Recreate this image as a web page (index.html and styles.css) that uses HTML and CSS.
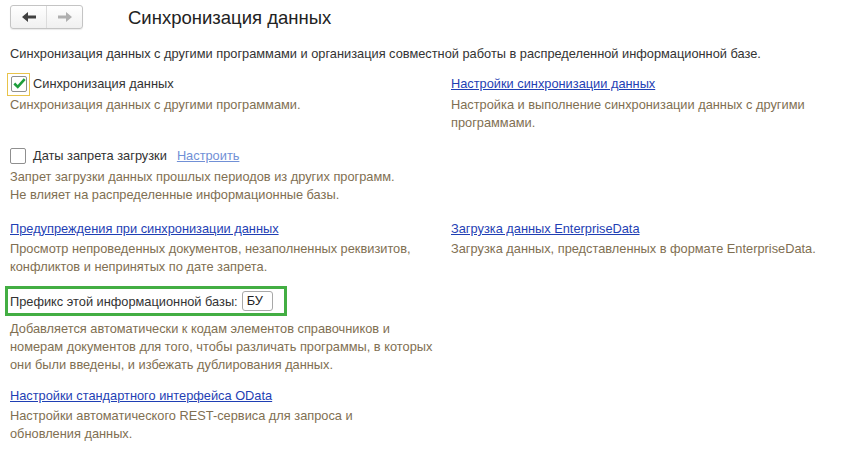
FILE: index.html
```html
<!DOCTYPE html>
<html lang="ru">
<head>
<meta charset="utf-8">
<title>Синхронизация данных</title>
<link rel="stylesheet" href="styles.css">
</head>
<body>
<div class="page">
  <header class="header">
    <div class="nav">
      <button class="nav-btn back" type="button" aria-label="Назад">
        <svg width="14" height="10" viewBox="0 0 14 10"><path d="M0 5 L6 0 L6 3.5 L14 3.5 L14 6.5 L6 6.5 L6 10 Z" fill="#404040"/></svg>
      </button>
      <button class="nav-btn fwd" type="button" aria-label="Вперед">
        <svg width="14" height="10" viewBox="0 0 14 10"><path d="M14 5 L8 0 L8 3.5 L0 3.5 L0 6.5 L8 6.5 L8 10 Z" fill="#b0b0b0"/></svg>
      </button>
    </div>
    <h1 class="title">Синхронизация данных</h1>
  </header>
  <p class="intro">Синхронизация данных с другими программами и организация совместной работы в распределенной информационной базе.</p>

  <div class="grid">
    <div class="cell row1">
      <div class="line">
        <span class="focus"><span class="check checked">
          <svg width="15" height="13" viewBox="0 0 15 13"><path d="M1.5 6.5 L5.5 10.5 L13.5 1.5" fill="none" stroke="#1e9e3c" stroke-width="3"/></svg>
        </span></span>
        <span class="label">Синхронизация данных</span>
      </div>
      <p class="hint">Синхронизация данных с другими программами.</p>
    </div>
    <div class="cell row1">
      <div class="line"><a class="link" href="#">Настройки синхронизации данных</a></div>
      <p class="hint">Настройка и выполнение синхронизации данных с другими<br>программами.</p>
    </div>

    <div class="cell row2">
      <div class="line">
        <span class="check"></span>
        <span class="label">Даты запрета загрузки</span>
        <a class="link light" href="#">Настроить</a>
      </div>
      <p class="hint">Запрет загрузки данных прошлых периодов из других программ.<br>Не влияет на распределенные информационные базы.</p>
    </div>
    <div class="cell row2"></div>

    <div class="cell row3">
      <div class="line"><a class="link" href="#">Предупреждения при синхронизации данных</a></div>
      <p class="hint">Просмотр непроведенных документов, незаполненных реквизитов,<br>конфликтов и непринятых по дате запрета.</p>
    </div>
    <div class="cell row3">
      <div class="line"><a class="link" href="#">Загрузка данных EnterpriseData</a></div>
      <p class="hint">Загрузка данных, представленных в формате EnterpriseData.</p>
    </div>

    <div class="cell row4">
      <div class="prefix">
        <span class="label">Префикс этой информационной базы:</span>
        <span class="field">БУ</span>
      </div>
      <p class="hint">Добавляется автоматически к кодам элементов справочников и<br>номерам документов для того, чтобы различать программы, в которых<br>они были введены, и избежать дублирования данных.</p>
    </div>
    <div class="cell row4"></div>

    <div class="cell row5">
      <div class="line"><a class="link" href="#">Настройки стандартного интерфейса OData</a></div>
      <p class="hint">Настройки автоматического REST-сервиса для запроса и<br>обновления данных.</p>
    </div>
    <div class="cell row5"></div>
  </div>
</div>
</body>
</html>
```

FILE: styles.css
```css
* { box-sizing: border-box; }
html, body { margin: 0; padding: 0; background: #fff; }
body {
  font-family: "Liberation Sans", Arial, sans-serif;
  font-size: 12.8px;
  color: #333;
  width: 855px;
  height: 459px;
  overflow: hidden;
}
.page { padding: 0 10px; }

.header {
  display: flex;
  align-items: center;
  height: 34px;
  padding-top: 5px;
  padding-bottom: 5px;
}
.nav {
  display: flex;
  width: 73px;
  height: 24px;
  border: 1px solid #c4c4c4;
  border-radius: 3px;
  background: linear-gradient(#ffffff, #f0f0f0);
  box-shadow: 0 1px 1px rgba(0,0,0,0.08);
}
.nav-btn {
  flex: 1;
  border: 0;
  background: transparent;
  padding: 0;
  display: flex;
  align-items: center;
  justify-content: center;
}
.nav-btn.back { border-right: 1px solid #dcdcdc; }
.title {
  margin: 1px 0 0 45px;
  font-weight: normal;
  font-size: 18.5px;
  color: #222;
  line-height: 24px;
}

.intro {
  margin: 11px 0 0;
  line-height: 18px;
  color: #333;
}

.grid {
  display: grid;
  grid-template-columns: 441px 1fr;
  margin-top: 12px;
}
.cell { min-height: 1px; }
.row1 { padding-bottom: 15px; }
.row2 { padding-bottom: 16px; }
.row3 { padding-bottom: 10px; }
.row4 { padding-bottom: 13px; }

.line {
  display: flex;
  align-items: center;
  height: 18px;
  line-height: 18px;
  margin-bottom: 3px;
}
.row3 .line, .row5 .line { margin-bottom: 2px; }
.label { color: #333; }
.hint {
  margin: 0;
  line-height: 18px;
  color: #7f6f52;
}
.link { color: #1f3fb4; text-decoration: underline; }
.link.light { color: #7190d6; margin-left: 10px; }

.focus {
  display: inline-flex;
  align-items: center;
  justify-content: center;
  width: 23px;
  height: 23px;
  margin: 0 3px 0 -3px;
  border: 1px solid #e8c34a;
}
.check {
  display: inline-flex;
  align-items: center;
  justify-content: center;
  width: 16px;
  height: 16px;
  border: 1px solid #8f8f8f;
  border-radius: 2px;
  background: #fff;
  margin-right: 7px;
}
.focus .check { margin-right: 0; width: 16px; height: 16px; }
.check svg { margin-top: -2px; margin-left: 1px; }

.prefix {
  display: inline-flex;
  align-items: center;
  margin-left: -5px;
  height: 30px;
  padding: 0 11px 0 2px;
  border: 3px solid #43ae43;
}
.field {
  display: inline-block;
  margin-left: 4px;
  width: 31px;
  height: 20px;
  line-height: 18px;
  padding-left: 4px;
  border: 1px solid #a8a8a8;
  border-radius: 3px;
  color: #222;
}
.row4 .hint { margin-top: 4px; }
```
